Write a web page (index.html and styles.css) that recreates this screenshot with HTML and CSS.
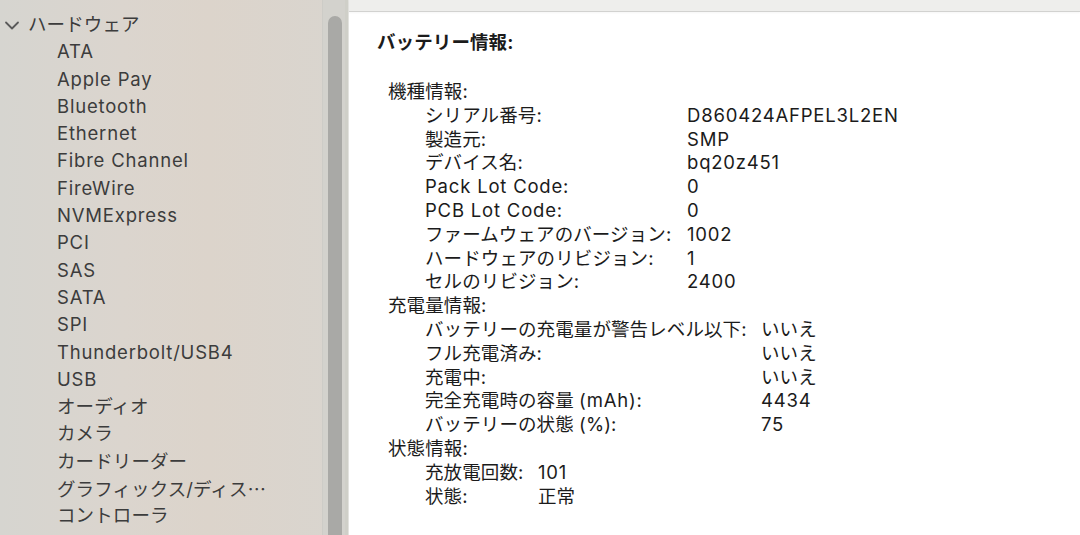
FILE: index.html
```html
<!DOCTYPE html>
<html lang="ja">
<head>
<meta charset="utf-8">
<title>システム情報 - バッテリー情報</title>
<link rel="stylesheet" href="styles.css">
</head>
<body>
<div class="app">
  <aside class="sidebar">
    <ul class="tree">
      <li class="group-row">
        <span class="chev"><svg width="16" height="9" viewBox="0 0 16 9"><polyline points="2,1.5 8,7.5 14,1.5" fill="none" stroke="#5a5a5a" stroke-width="1.8" stroke-linecap="round" stroke-linejoin="round"/></svg></span>
        <span>ハードウェア</span>
      </li>
      <li class="item l">ATA</li>
      <li class="item l">Apple Pay</li>
      <li class="item l">Bluetooth</li>
      <li class="item l">Ethernet</li>
      <li class="item l">Fibre Channel</li>
      <li class="item l">FireWire</li>
      <li class="item l">NVMExpress</li>
      <li class="item l">PCI</li>
      <li class="item l">SAS</li>
      <li class="item l">SATA</li>
      <li class="item l">SPI</li>
      <li class="item l">Thunderbolt/USB4</li>
      <li class="item l">USB</li>
      <li class="item">オーディオ</li>
      <li class="item">カメラ</li>
      <li class="item">カードリーダー</li>
      <li class="item">グラフィックス/ディス<span class="ell">…</span></li>
      <li class="item">コントローラ</li>
    </ul>
    <div class="scrollbar"><div class="thumb"></div></div>
  </aside>
  <main class="pane">
    <div class="topbar"></div>
    <div class="content">
      <h1 class="title">バッテリー情報:</h1>
      <section class="info">
        <div class="ghead">機種情報:</div>
        <div class="kv kv-model">
          <span>シリアル番号:</span><span class="l">D860424AFPEL3L2EN</span>
          <span>製造元:</span><span class="l">SMP</span>
          <span>デバイス名:</span><span class="l">bq20z451</span>
          <span class="l">Pack Lot Code:</span><span class="l">0</span>
          <span class="l">PCB Lot Code:</span><span class="l">0</span>
          <span>ファームウェアのバージョン:</span><span class="l">1002</span>
          <span>ハードウェアのリビジョン:</span><span class="l">1</span>
          <span>セルのリビジョン:</span><span class="l">2400</span>
        </div>
        <div class="ghead">充電量情報:</div>
        <div class="kv kv-charge">
          <span>バッテリーの充電量が警告レベル以下:</span><span>いいえ</span>
          <span>フル充電済み:</span><span>いいえ</span>
          <span>充電中:</span><span>いいえ</span>
          <span>完全充電時の容量 <i class="l">(mAh)</i>:</span><span class="l">4434</span>
          <span>バッテリーの状態 (%):</span><span class="l">75</span>
        </div>
        <div class="ghead">状態情報:</div>
        <div class="kv kv-state">
          <span>充放電回数:</span><span class="l">101</span>
          <span>状態:</span><span>正常</span>
        </div>
      </section>
    </div>
  </main>
</div>
</body>
</html>
```

FILE: styles.css
```css
* { box-sizing: border-box; }
html, body {
  margin: 0;
  padding: 0;
  width: 1080px;
  height: 535px;
  overflow: hidden;
  background: #ffffff;
}
body {
  font-family: "Inter", "Noto Sans CJK JP", sans-serif;
  font-size: 18.5px;
  letter-spacing: 0.1px;
}
.l {
  letter-spacing: 0.8px;
  font-style: normal;
}
.app {
  display: flex;
  height: 535px;
}
.sidebar {
  width: 349px;
  flex: none;
  display: flex;
  background: linear-gradient(90deg, #d6d5d0 0%, #dbd5ce 35%, #dcd4cb 60%, #d9d5cf 100%);
  border-right: 1px solid #e3e3df;
  overflow: hidden;
}
.tree {
  list-style: none;
  margin: 0;
  padding: 11px 0 0 0;
  flex: 1;
  color: #3c3c3c;
}
.tree li {
  height: 27.3px;
  line-height: 27.3px;
  white-space: nowrap;
}
.ell {
  font-family: "Noto Sans CJK JP", sans-serif;
  letter-spacing: 0;
}
.group-row {
  display: flex;
  align-items: center;
}
.chev {
  width: 28px;
  display: flex;
  justify-content: flex-start;
  padding-left: 4px;
  padding-top: 1px;
}
.item {
  padding-left: 57px;
}
.scrollbar {
  width: 26px;
  flex: none;
  display: flex;
  padding: 16px 6px 0 5px;
  background: linear-gradient(90deg, #d3d2cd 0px, #d3d2cd 22px, #cfcfc8 22px);
  border-left: 1px solid #cdccc7;
}
.thumb {
  width: 15px;
  flex: 1;
  background: #a9a9a6;
  border-radius: 8px 8px 0 0;
}
.pane {
  flex: 1;
  display: flex;
  flex-direction: column;
  color: #1b1b1b;
}
.topbar {
  height: 12px;
  flex: none;
  background: #eeeeec;
  border-bottom: 1px solid #d2d2d0;
  box-shadow: 0 1px 2px rgba(0,0,0,0.04);
}
.content {
  padding: 18px 0 0 28px;
}
.title {
  margin: 0;
  font-size: 18.5px;
  font-weight: 700;
  line-height: 24px;
}
.info {
  margin-top: 26px;
  padding-left: 11px;
  line-height: 23.8px;
}
.ghead {
  height: 23.8px;
}
.kv {
  display: grid;
  padding-left: 37px;
}
.kv span {
  height: 23.8px;
  white-space: nowrap;
}
.kv-model { grid-template-columns: 262px auto; }
.kv-charge { grid-template-columns: 336px auto; }
.kv-state { grid-template-columns: 113px auto; }
```
